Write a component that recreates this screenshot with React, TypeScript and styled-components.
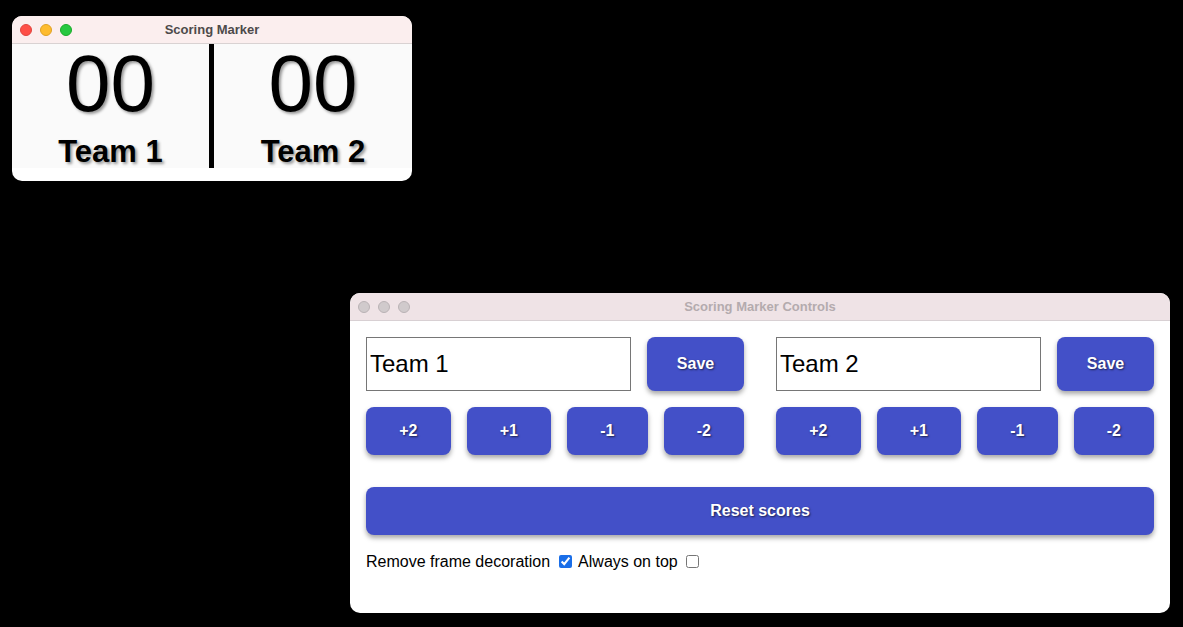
import React from "react";
import styled, { createGlobalStyle } from "styled-components";

const Global = createGlobalStyle`
  html, body {
    margin: 0;
    padding: 0;
    background: #000;
    width: 1183px;
    height: 627px;
    overflow: hidden;
    font-family: "Liberation Sans", Arial, sans-serif;
  }
`;

const Desktop = styled.div`
  position: relative;
  width: 1183px;
  height: 627px;
  background: #000;
`;

const Window = styled.div<{ $x: number; $y: number; $w: number; $h: number; $bg: string }>`
  position: absolute;
  left: ${(p) => p.$x}px;
  top: ${(p) => p.$y}px;
  width: ${(p) => p.$w}px;
  height: ${(p) => p.$h}px;
  border-radius: 10px;
  overflow: hidden;
  background: ${(p) => p.$bg};
  display: flex;
  flex-direction: column;
`;

const TitleBar = styled.div<{ $bg: string; $active: boolean }>`
  position: relative;
  height: 27px;
  flex: none;
  background: ${(p) => p.$bg};
  border-bottom: 1px solid ${(p) => (p.$active ? "#d9d2d2" : "#d8d0d3")};
  display: flex;
  align-items: center;
  justify-content: center;
  font-size: 13px;
  font-weight: bold;
  color: ${(p) => (p.$active ? "#4d4a4a" : "#b4abae")};
`;

const Lights = styled.div`
  position: absolute;
  left: 8px;
  top: 8px;
  display: flex;
  gap: 8px;
`;

const Light = styled.span<{ $color: string; $edge: string }>`
  width: 12px;
  height: 12px;
  box-sizing: border-box;
  border-radius: 50%;
  background: ${(p) => p.$color};
  border: 0.5px solid ${(p) => p.$edge};
`;

const Board = styled.div`
  height: 124px;
  background: #fafafa;
  display: grid;
  grid-template-columns: 197px 5px 1fr;
`;

const Side = styled.div`
  display: flex;
  flex-direction: column;
  align-items: center;
`;

const Score = styled.div`
  font-size: 80px;
  line-height: 80px;
  color: #000;
  text-shadow: 2px 2px 3px rgba(0, 0, 0, 0.4);
`;

const TeamName = styled.div`
  margin-top: 12px;
  font-size: 31px;
  line-height: 31px;
  font-weight: bold;
  color: #000;
  text-shadow: 2px 2px 3px rgba(0, 0, 0, 0.4);
`;

const Divider = styled.div`
  background: #000;
`;

const Controls = styled.div`
  padding: 16px;
  display: flex;
  flex-direction: column;
`;

const Groups = styled.div`
  display: grid;
  grid-template-columns: minmax(0, 1fr) minmax(0, 1fr);
  column-gap: 32px;
`;

const Group = styled.div`
  min-width: 0;
  display: flex;
  flex-direction: column;
  gap: 16px;
`;

const NameRow = styled.div`
  display: flex;
  gap: 16px;
  height: 54px;
`;

const NameInput = styled.input`
  flex: 1 1 0;
  width: 0;
  min-width: 0;
  box-sizing: border-box;
  height: 54px;
  border: 1px solid #767676;
  border-radius: 0;
  padding: 0 3px;
  font-family: "Liberation Sans", Arial, sans-serif;
  font-size: 24px;
  color: #000;
  background: #fff;
  outline: none;
`;

const Button = styled.button<{ $w?: number; $grow?: boolean }>`
  box-sizing: border-box;
  ${(p) => (p.$w ? `width: ${p.$w}px; flex: none;` : "")}
  ${(p) => (p.$grow ? "flex: 1 1 auto;" : "")}
  height: 100%;
  border: none;
  border-radius: 8px;
  background: #4350c8;
  color: #fff;
  font-family: "Liberation Sans", Arial, sans-serif;
  font-size: 16px;
  font-weight: bold;
  text-shadow: 1px 1px 2px rgba(0, 0, 0, 0.6);
  box-shadow: 0 3px 5px rgba(0, 0, 0, 0.35);
  padding: 0 8px;
  cursor: pointer;
`;

const StepRow = styled.div`
  display: flex;
  gap: 16px;
  height: 48px;
`;

const ResetRow = styled.div`
  margin-top: 32px;
  height: 48px;
  display: flex;
`;

const Options = styled.div`
  margin-top: 17px;
  font-size: 16px;
  line-height: 18px;
  color: #000;
  input {
    accent-color: #1a6ee8;
    vertical-align: -1px;
  }
`;

const Pair = ({ name }: { name: string }) => (
  <Group>
    <NameRow>
      <NameInput defaultValue={name} />
      <Button $w={97}>Save</Button>
    </NameRow>
    <StepRow>
      {["+2", "+1", "-1", "-2"].map((s) => (
        <Button key={s} $grow>
          {s}
        </Button>
      ))}
    </StepRow>
  </Group>
);

export default function App() {
  return (
    <Desktop>
      <Global />
      <Window $x={12} $y={16} $w={400} $h={165} $bg="#fff">
        <TitleBar $bg="#fbeeee" $active>
          <Lights>
            <Light $color="#fe4f47" $edge="#e0443e" />
            <Light $color="#febb2e" $edge="#dea123" />
            <Light $color="#27c840" $edge="#1aab29" />
          </Lights>
          Scoring Marker
        </TitleBar>
        <Board>
          <Side>
            <Score>00</Score>
            <TeamName>Team 1</TeamName>
          </Side>
          <Divider />
          <Side>
            <Score>00</Score>
            <TeamName>Team 2</TeamName>
          </Side>
        </Board>
      </Window>

      <Window $x={350} $y={293} $w={820} $h={320} $bg="#fff">
        <TitleBar $bg="#efe3e6" $active={false}>
          <Lights>
            <Light $color="#d0cacc" $edge="#b9b2b5" />
            <Light $color="#d0cacc" $edge="#b9b2b5" />
            <Light $color="#d0cacc" $edge="#b9b2b5" />
          </Lights>
          Scoring Marker Controls
        </TitleBar>
        <Controls>
          <Groups>
            <Pair name="Team 1" />
            <Pair name="Team 2" />
          </Groups>
          <ResetRow>
            <Button $grow>Reset scores</Button>
          </ResetRow>
          <Options>
            Remove frame decoration <input type="checkbox" defaultChecked /> Always on top{" "}
            <input type="checkbox" />
          </Options>
        </Controls>
      </Window>
    </Desktop>
  );
}
